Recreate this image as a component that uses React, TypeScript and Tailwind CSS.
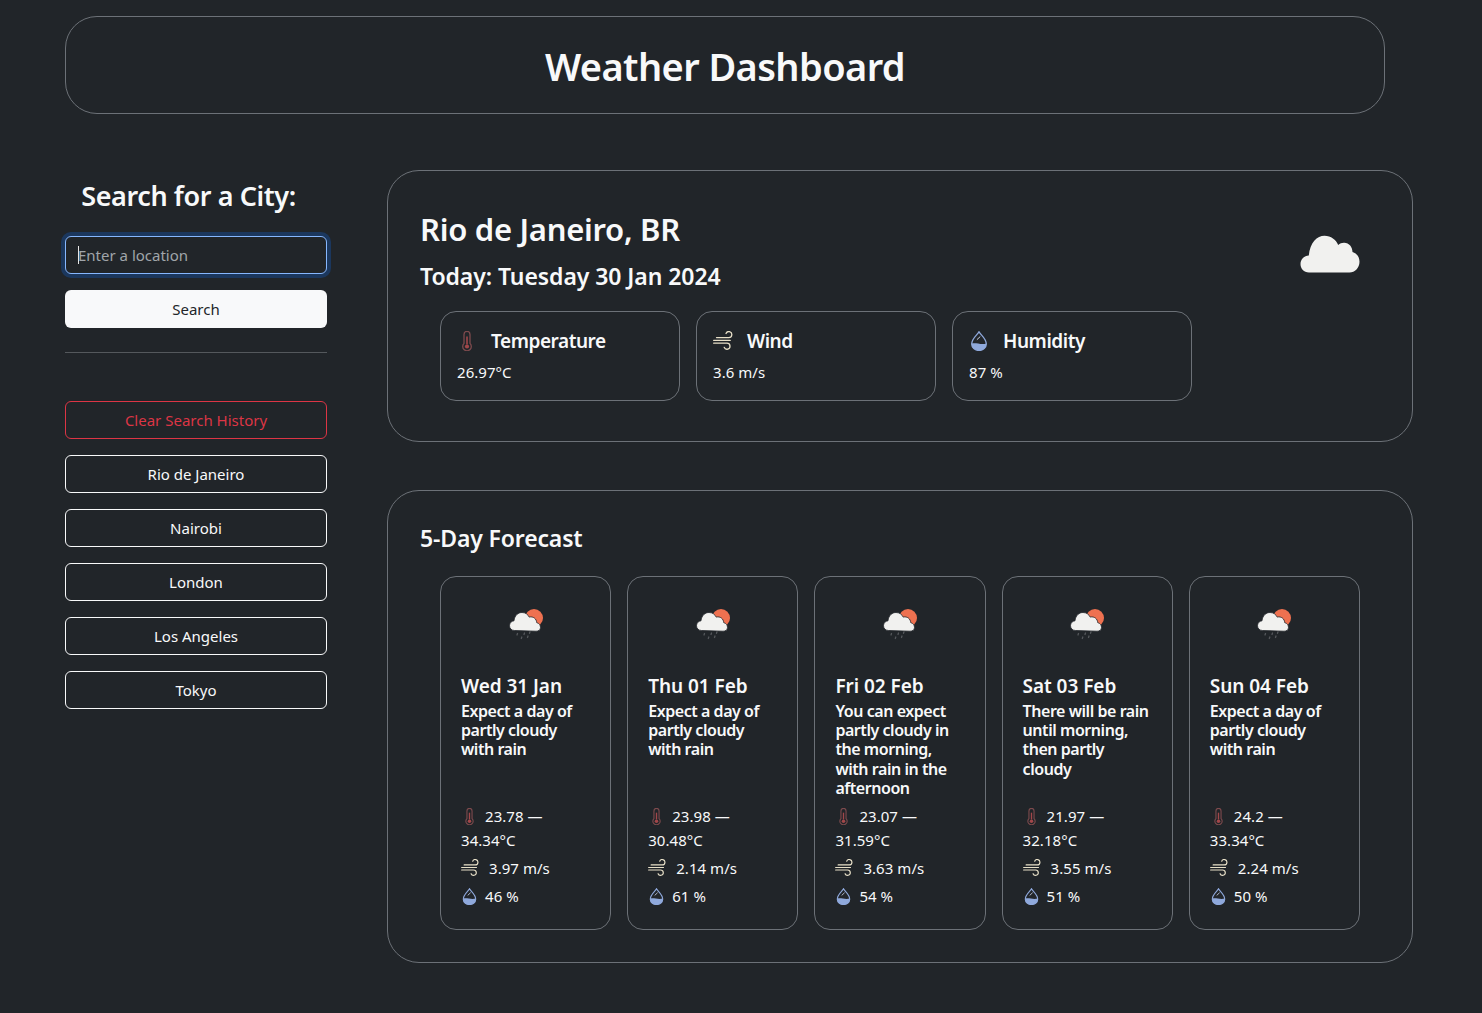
const forecast = [
  { date: "Wed 31 Jan", text: "Expect a day of partly cloudy with rain", low: "23.78", high: "34.34", wind: "3.97", humidity: "46" },
  { date: "Thu 01 Feb", text: "Expect a day of partly cloudy with rain", low: "23.98", high: "30.48", wind: "2.14", humidity: "61" },
  { date: "Fri 02 Feb", text: "You can expect partly cloudy in the morning, with rain in the afternoon", low: "23.07", high: "31.59", wind: "3.63", humidity: "54" },
  { date: "Sat 03 Feb", text: "There will be rain until morning, then partly cloudy", low: "21.97", high: "32.18", wind: "3.55", humidity: "51" },
  { date: "Sun 04 Feb", text: "Expect a day of partly cloudy with rain", low: "24.2", high: "33.34", wind: "2.24", humidity: "50" },
];

const history = ["Rio de Janeiro", "Nairobi", "London", "Los Angeles", "Tokyo"];

const Thermometer = ({ size = 20 }: { size?: number }) => (
  <svg width={size} height={size} viewBox="0 0 20 20" fill="none" className="shrink-0">
    <path d="M7 3.400a3 3 0 0 1 6 0v9a4.300 4.300 0 1 1-6 0z" stroke="#7d4a4d" strokeWidth="1.300" />
    <path d="M10 5.500v8" stroke="#a2474a" strokeWidth="1.600" />
    <circle cx="10" cy="15.500" r="2.100" fill="#a2474a" />
  </svg>
);

const Wind = ({ size = 20 }: { size?: number }) => (
  <svg width={size} height={size} viewBox="0 0 20 20" fill="none" stroke="#e8e0c8" strokeWidth="1.300" strokeLinecap="round" className="shrink-0">
    <path d="M3.500 6.600h12.300a3 3 0 1 0-2.800-4.100" />
    <path d="M.700 9.400h16.500" />
    <path d="M.700 12.200h13.300a3 3 0 1 1-2.800 4.100" />
  </svg>
);

const Droplet = ({ size = 20 }: { size?: number }) => (
  <svg width={size} height={size} viewBox="0 0 20 20" fill="none" className="shrink-0">
    <path d="M10 .8c1.600 3.200 7.300 6.500 7.300 12.300a7.300 6.400 0 0 1-14.600 0C2.700 7.300 8.400 4 10 .8z" fill="#22262b" stroke="#8fa9dc" strokeWidth="1.300" />
    <path d="M2.700 12.600c3.400-1.400 9.800 1.500 14.600-.2.400 4-3 7.100-7.300 7.100s-7.700-3-7.300-6.900z" fill="#8fa9dc" />
    <path d="M11 5.800 8.200 8.400" stroke="#d6e0f4" strokeWidth="0.900" strokeLinecap="round" />
  </svg>
);

const Cloud = () => (
  <svg width="60" height="38" viewBox="0 0 60 38" className="shrink-0">
    <path
      d="M9 37.500C3.800 37.500.500 33.500.500 29c0-4.800 3.800-8.500 8.300-8.600C10 7.500 17 .700 24.500.700c6.500 0 11.500 4 13.700 9.200 1.700-1.500 3.800-2.300 6-2.200 5 .3 8.300 4.200 8.300 9.300 4.300 1.300 7 5 7 9.700 0 6-4.600 10.800-10 10.800z"
      fill="#f1f1ef"
    />
  </svg>
);

const RainCloudSun = () => (
  <svg width="36" height="36" viewBox="0 0 36 36" className="ml-[2px] shrink-0">
    <circle cx="25" cy="11" r="9" fill="#ee7150" />
    <path
      d="M5.500 23.500C2.500 23.500.500 21.300.500 18.700c0-2.700 2-4.700 4.500-4.900.600-5.500 4.200-8.300 8-8.300 3.500 0 6 2 7.200 4.600 4.200-1 7.300 1.800 7.500 5.500 2.500.700 3.800 2.700 3.800 4.800 0 2.800-2.300 3.800-4.500 3.800z"
      fill="#f1f1ef"
      stroke="#22262b"
      strokeWidth="0.800"
    />
    <g stroke="#55585c" strokeWidth="1.300" strokeLinecap="round">
      <path d="M8.500 26.500 8 28" />
      <path d="M15.500 26 15 27.500" />
      <path d="M21 24.800 20.500 26.300" />
      <path d="M12.800 30 12.300 31.500" />
      <path d="M19 29 18.500 30.500" />
    </g>
  </svg>
);

const Stat = ({ icon, label, value }: { icon: React.ReactNode; label: string; value: string }) => (
  <div className="h-[90px] w-[240px] rounded-2xl border border-[#6c7177] px-4 pt-[15px]">
    <div className="flex h-[28px] items-center gap-[14px] text-[19px] font-semibold tracking-[-0.45px]">
      {icon}
      <span>{label}</span>
    </div>
    <p className="mt-[5px] text-[15px] leading-6 tracking-[0.05px]">{value}</p>
  </div>
);

const App = () => {
  return (
    <div className="min-h-[1013px] bg-[#212529] pt-4 pl-[65px] text-[#f8f9fa] [font-family:'Noto_Sans','Open_Sans',sans-serif]">
      <header className="flex h-[98px] w-[1320px] items-center justify-center rounded-[32px] border border-[#6c7177]">
        <h1 className="mt-[2px] text-[38px] font-semibold tracking-[-0.6px]">Weather Dashboard</h1>
      </header>

      <div className="mt-14 flex gap-[60px]">
        <aside className="w-[262px]">
          <h2 className="mt-[7px] h-[42px] pr-[15px] text-center text-[27px] leading-[38px] font-semibold tracking-[-0.4px]">Search for a City:</h2>
          <div className="relative mt-[17px]">
            <input
              readOnly
              placeholder="Enter a location"
              className="block h-[38px] w-full rounded-md border border-[#86b7fe] bg-[#212529] px-3 text-[15px] text-white shadow-[0_0_0_4px_rgba(13,110,253,0.25)] outline-none placeholder:text-[#a0a5aa]"
            />
            <span className="absolute top-[10px] left-[13px] h-[18px] w-px bg-[#e8e8e8]" />
          </div>
          <button className="mt-4 block h-[38px] w-full rounded-md bg-[#f8f9fa] text-[15px] text-[#212529]">Search</button>
          <hr className="mt-6 border-[#54585c]" />
          <div className="mt-12 flex flex-col gap-4">
            <button className="h-[38px] rounded-md border border-[#dc3545] text-[15px] text-[#dc3545]">Clear Search History</button>
            {history.map((city) => (
              <button key={city} className="h-[38px] rounded-md border border-[#f8f9fa] text-[15px]">
                {city}
              </button>
            ))}
          </div>
        </aside>

        <main className="w-[1026px]">
          <section className="flex h-[272px] justify-between rounded-[32px] border border-[#6c7177] pt-[36px] pl-[32px]">
            <div>
              <h2 className="text-[31px] leading-[44px] font-semibold tracking-[-0.28px]">Rio de Janeiro, BR</h2>
              <h3 className="mt-[9px] text-[23px] leading-[32px] font-semibold tracking-[-0.07px]">Today: Tuesday 30 Jan 2024</h3>
              <div className="mt-[19px] ml-5 flex gap-4">
                <Stat icon={<Thermometer />} label="Temperature" value="26.97°C" />
                <Stat icon={<Wind />} label="Wind" value="3.6 m/s" />
                <Stat icon={<Droplet />} label="Humidity" value="87 %" />
              </div>
            </div>
            <div className="pt-[28px] pr-[52px]">
              <Cloud />
            </div>
          </section>

          <section className="mt-12 h-[473px] rounded-[32px] border border-[#6c7177] pt-[30px] pr-[52px] pl-[32px]">
            <h3 className="text-[23px] leading-[34px] font-semibold tracking-[-0.15px]">5-Day Forecast</h3>
            <div className="mt-[21px] ml-5 grid h-[354px] grid-cols-5 gap-4">
              {forecast.map((day) => (
                <div key={day.date} className="flex flex-col rounded-2xl border border-[#6c7177] px-5 pt-[30px]">
                  <div className="flex justify-center">
                    <RainCloudSun />
                  </div>
                  <h4 className="mt-[29px] text-[19px] leading-[28px] font-semibold tracking-[-0.05px]">{day.date}</h4>
                  <p className="mt-[2px] h-[96px] text-[16px] leading-[19.2px] font-semibold tracking-[-0.45px]">{day.text}</p>
                  <div className="mt-[6px] text-[15px] leading-6 tracking-[0.05px]">
                    <div className="flex items-center gap-[7px]">
                      <Thermometer size={17} />
                      <span>{day.low} —</span>
                    </div>
                    <div>{day.high}°C</div>
                    <div className="mt-1 flex items-center gap-[10px]">
                      <Wind size={18} />
                      <span>{day.wind} m/s</span>
                    </div>
                    <div className="mt-1 flex items-center gap-[7px]">
                      <Droplet size={17} />
                      <span>{day.humidity} %</span>
                    </div>
                  </div>
                </div>
              ))}
            </div>
          </section>
        </main>
      </div>
    </div>
  );
};

export default App;
